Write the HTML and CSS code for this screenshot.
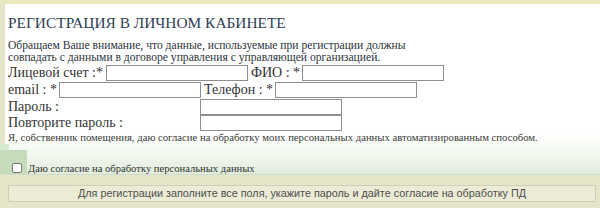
FILE: index.html
```html
<!DOCTYPE html>
<html lang="ru">
<head>
<meta charset="utf-8">
<link rel="stylesheet" href="styles.css">
</head>
<body>
<div class="page">
  <div class="panel">
    <div class="blob"></div>
    <h1 class="title">РЕГИСТРАЦИЯ В ЛИЧНОМ КАБИНЕТЕ</h1>
    <p class="notice">Обращаем Ваше внимание, что данные, используемые при регистрации должны<br>совпадать с данными в договоре управления с управляющей организацией.</p>
    <div class="row">
      <span class="lbl">Лицевой счет :*</span><span class="field f-acc"></span>
      <span class="lbl lbl-gap">ФИО : *</span><span class="field f-fio"></span>
    </div>
    <div class="row">
      <span class="lbl">email : *</span><span class="field f-mail"></span>
      <span class="lbl lbl-gap">Телефон : *</span><span class="field f-tel"></span>
    </div>
    <div class="row row-pass">
      <span class="lbl lbl-pass">Пароль :</span><span class="field f-pass"></span>
    </div>
    <div class="row row-pass2">
      <span class="lbl lbl-pass">Повторите пароль :</span><span class="field f-pass"></span>
    </div>
    <p class="consent">Я, собственник помещения, даю согласие на обработку моих персональных данных автоматизированным способом.</p>
    <div class="check-row">
      <span class="box"></span>
      <span class="check-lbl">Даю согласие на обработку персональных данных</span>
    </div>
  </div>
  <div class="footer">
    <div class="btn">Для регистрации заполните все поля, укажите пароль и дайте согласие на обработку ПД</div>
  </div>
</div>
</body>
</html>
```
FILE: styles.css
```css
html, body {
  margin: 0;
  padding: 0;
}
body {
  width: 600px;
  height: 208px;
  overflow: hidden;
  background: #e6e6c8;
  font-family: "Liberation Serif", "DejaVu Serif", serif;
  color: #333;
}
.page {
  padding-top: 4px;
  background: linear-gradient(#e9e9bf 0, #e9e9bf 4px, #e5e5c9 4px);
  height: 208px;
  box-sizing: border-box;
}
.panel {
  margin-left: 5px;
  height: 171px;
  box-sizing: border-box;
  padding: 9px 0 0 3px;
  background: linear-gradient(#ffffff 0, #ffffff 128px, #f3f8f0 150px, #dfebd9 171px);
  border-bottom: 1px solid #d2dccb;
  position: relative;
}
.blob {
  position: absolute;
  left: -5px;
  bottom: 0;
  width: 27px;
  height: 24px;
  background: #c4dcbb;
}
.blob::before {
  content: "";
  position: absolute;
  left: 0;
  top: -6px;
  width: 9px;
  height: 6px;
  background: #d8e9d2;
}
.title {
  position: relative;
  margin: 0;
  font-weight: normal;
  font-size: 15.4px;
  line-height: 20px;
  color: #2e4055;
}
.notice {
  margin: 7px 0 0 0;
  font-size: 11.6px;
  line-height: 12px;
  color: #2d3440;
}
.row {
  display: flex;
  align-items: center;
  height: 17px;
  font-size: 14px;
  color: #333;
}
.lbl { white-space: nowrap; line-height: 16px; }
.lbl-gap { margin-left: 3px; }
.field {
  display: block;
  height: 16px;
  box-sizing: border-box;
  border: 1px solid #8f8f8f;
  background: #fff;
  margin-left: 2px;
}
.f-acc { width: 142px; margin-left: 3px; }
.f-fio { width: 142px; }
.f-mail { width: 142px; }
.f-tel { width: 142px; }
.lbl-pass { width: 192px; }
.f-pass { width: 142px; margin-left: 0; }
.row-pass2 { margin-top: -1px; }
.consent {
  margin: 0;
  font-size: 10.7px;
  line-height: 12px;
  color: #3d3d3d;
}
.check-row {
  position: relative;
  z-index: 1;
  display: flex;
  align-items: center;
  margin-top: 18px;
  margin-left: 4px;
  height: 14px;
}
.box {
  width: 10px;
  height: 10px;
  box-sizing: border-box;
  border: 1px solid #777;
  border-radius: 2px;
  background: #fff;
}
.check-lbl {
  margin-left: 6px;
  font-size: 10.6px;
  color: #333;
}
.footer {
  padding: 10px 4px 0 8px;
}
.btn {
  height: 17px;
  box-sizing: border-box;
  border: 1px solid #cfcfb7;
  background: #ececd6;
  font-family: "Liberation Sans", Arial, sans-serif;
  font-size: 10.8px;
  line-height: 15px;
  color: #4d4d4d;
  text-align: center;
}
```
